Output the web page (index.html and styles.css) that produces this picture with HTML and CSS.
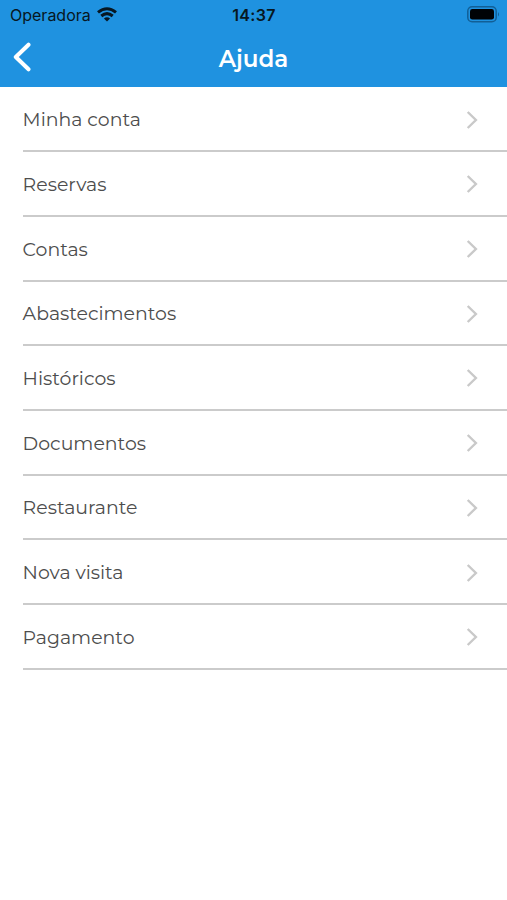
FILE: index.html
```html
<!DOCTYPE html>
<html lang="pt">
<head>
<meta charset="utf-8">
<title>Ajuda</title>
<link rel="stylesheet" href="styles.css">
</head>
<body>
<svg class="defs" width="0" height="0"><symbol id="chevron" viewBox="0 0 12 20"><path d="M1.7 2 L9.9 10 L1.7 18" fill="none" stroke="currentColor" stroke-width="2.4"/></symbol></svg>
<header class="header">
  <div class="status">
    <div class="carrier"><span>Operadora</span>
      <svg class="wifi" width="20" height="15" viewBox="0 0 20 15" fill="none" stroke="#071722" stroke-width="3"><path d="M1 5.4 Q10 -2 19 5.4"/><path d="M4.3 9 Q10 4.2 15.7 9"/><path d="M10 14.6 L6.9 11.5 Q10 9 13.1 11.5 Z" fill="#071722" stroke="none"/></svg>
    </div>
    <span class="time">14:37</span>
    <svg class="battery" width="33" height="17" viewBox="0 0 33 17"><rect x=".8" y=".8" width="28.4" height="15" rx="4.3" fill="none" stroke="#125f96" stroke-width="1.5"/><rect x="3" y="3" width="24" height="10.6" rx="2.4" fill="#000306"/><path d="M31 6 Q33 8.3 31 10.6Z" fill="#125f96"/></svg>
  </div>
  <div class="nav">
    <svg class="back" width="20" height="30" viewBox="0 0 20 30"><path d="M16.5 2.7 L3.8 15 L16.5 27.3" fill="none" stroke="#fff" stroke-width="4" stroke-linecap="round" stroke-linejoin="round"/></svg>
    <h1>Ajuda</h1>
  </div>
</header>
<main class="list">
  <div class="row"><span>Minha conta</span><svg class="chevron"><use href="#chevron"/></svg></div>
  <div class="row"><span>Reservas</span><svg class="chevron"><use href="#chevron"/></svg></div>
  <div class="row"><span>Contas</span><svg class="chevron"><use href="#chevron"/></svg></div>
  <div class="row"><span>Abastecimentos</span><svg class="chevron"><use href="#chevron"/></svg></div>
  <div class="row"><span>Históricos</span><svg class="chevron"><use href="#chevron"/></svg></div>
  <div class="row"><span>Documentos</span><svg class="chevron"><use href="#chevron"/></svg></div>
  <div class="row"><span>Restaurante</span><svg class="chevron"><use href="#chevron"/></svg></div>
  <div class="row"><span>Nova visita</span><svg class="chevron"><use href="#chevron"/></svg></div>
  <div class="row"><span>Pagamento</span><svg class="chevron"><use href="#chevron"/></svg></div>
</main>
</body>
</html>
```
FILE: styles.css
```css
* { box-sizing: border-box; }
body { margin: 0; min-height: 900px; background: #fff; font-family: Montserrat, Inter, sans-serif; }
.defs { display: block; }
.header { height: 87px; background: #1f92e0; }
.status { height: 30px; display: grid; grid-template-columns: 1fr auto 1fr; align-items: center; padding: 0 7px 0 10px; color: #071722; font-family: Inter, sans-serif; }
.carrier { display: flex; align-items: center; gap: 6px; font-size: 16px; }
.wifi { margin-top: -1px; }
.time { font-size: 16px; font-weight: 600; letter-spacing: .3px; margin-left: -2px; }
.battery { justify-self: end; margin-top: -2px; }
.nav { height: 57px; display: grid; grid-template-columns: 1fr auto 1fr; align-items: center; padding: 0 12px; }
.back { margin-top: -3px; }
h1 { margin: 1px 0 0; color: #fff; font-size: 23px; line-height: 30px; font-weight: 600; }
.list { padding: .6px 0 0 22.6px; }
.row { height: 64.7px; display: flex; align-items: center; justify-content: space-between; padding: 1.5px 29px 0 0; border-bottom: 2px solid #cbcbcb; color: #4d4d4d; font-size: 18.9px; }
.chevron { width: 12px; height: 20px; color: #c9c9c9; }
```
